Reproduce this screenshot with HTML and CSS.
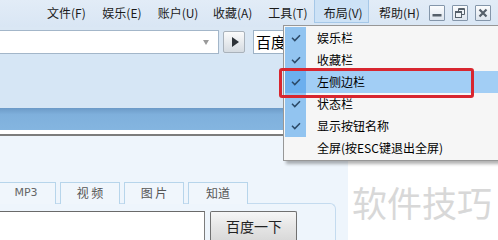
FILE: index.html
```html
<!DOCTYPE html>
<html lang="zh-CN">
<head>
<meta charset="utf-8">
<title>布局菜单</title>
<link rel="stylesheet" href="styles.css">
</head>
<body>
<div class="app">
  <header class="menubar">
    <nav class="menus">
      <span class="menu">文件(F)</span>
      <span class="menu">娱乐(E)</span>
      <span class="menu">账户(U)</span>
      <span class="menu">收藏(A)</span>
      <span class="menu">工具(T)</span>
      <span class="menu menu-open">布局(V)</span>
      <span class="menu">帮助(H)</span>
    </nav>
    <div class="winbtns">
      <span class="winbtn"><svg width="14" height="14" viewBox="0 0 14 14"><rect x="2.5" y="8" width="9" height="2.5" fill="#56606a"/></svg></span>
      <span class="winbtn"><svg width="14" height="14" viewBox="0 0 14 14"><path d="M5.5 2.5h6v6h-6z M5.5 3.5h6" fill="none" stroke="#56606a" stroke-width="1"/><rect x="2.5" y="5.5" width="6" height="6" fill="#eef2f6" stroke="#56606a" stroke-width="1"/><path d="M2.5 6.5h6" stroke="#56606a" stroke-width="1"/></svg></span>
      <span class="winbtn"><svg width="14" height="14" viewBox="0 0 14 14"><path d="M3.5 3.5l7 7M10.5 3.5l-7 7" stroke="#56606a" stroke-width="2.2"/></svg></span>
    </div>
  </header>

  <div class="toolbar">
    <div class="addr"><span class="addr-arrow"></span></div>
    <span class="go"><span class="go-tri"></span></span>
    <div class="engine">百度</div>
  </div>

  <div class="band"></div>
  <div class="bluebar"></div>
  <div class="sep"></div>

  <div class="content">
    <div class="left">
      <div class="tabs">
        <span class="tab tab-mp3">MP3</span>
        <span class="tab">视 频</span>
        <span class="tab">图 片</span>
        <span class="tab">知道</span>
      </div>
      <div class="panel">
        <div class="query"></div>
        <span class="submit">百度一下</span>
      </div>
    </div>
    <div class="right">
      <span class="watermark">软件技巧</span>
    </div>
  </div>
</div>

<div class="dropdown">
  <div class="item checked"><span class="chk"><svg width="10" height="8" viewBox="0 0 10 8"><path d="M1 3.8L3.8 6.6L9 1.2" fill="none" stroke="#2c4a68" stroke-width="1.5"/></svg></span><span class="label">娱乐栏</span></div>
  <div class="item checked"><span class="chk"><svg width="10" height="8" viewBox="0 0 10 8"><path d="M1 3.8L3.8 6.6L9 1.2" fill="none" stroke="#2c4a68" stroke-width="1.5"/></svg></span><span class="label">收藏栏</span></div>
  <div class="item checked hot"><span class="chk"><svg width="10" height="8" viewBox="0 0 10 8"><path d="M1 3.8L3.8 6.6L9 1.2" fill="none" stroke="#2c4a68" stroke-width="1.5"/></svg></span><span class="label">左侧边栏</span></div>
  <div class="item checked"><span class="chk"><svg width="10" height="8" viewBox="0 0 10 8"><path d="M1 3.8L3.8 6.6L9 1.2" fill="none" stroke="#2c4a68" stroke-width="1.5"/></svg></span><span class="label">状态栏</span></div>
  <div class="item checked"><span class="chk"><svg width="10" height="8" viewBox="0 0 10 8"><path d="M1 3.8L3.8 6.6L9 1.2" fill="none" stroke="#2c4a68" stroke-width="1.5"/></svg></span><span class="label">显示按钮名称</span></div>
  <div class="item"><span class="chk"></span><span class="label">全屏(按ESC键退出全屏)</span></div>
</div>
<div class="callout"></div>
</body>
</html>
```

FILE: styles.css
```css
html, body {
  margin: 0;
  padding: 0;
}
body {
  width: 498px;
  height: 240px;
  overflow: hidden;
  position: relative;
  font-family: "Noto Sans CJK SC", "Liberation Sans", sans-serif;
  font-size: 12px;
  color: #000;
  background: #fff;
}
.app {
  height: 240px;
  overflow: hidden;
}

/* menu bar */
.menubar {
  height: 27px;
  display: flex;
  background: linear-gradient(#e2ecf7, #d9e6f4);
}
.menus {
  display: flex;
  padding-left: 37px;
}
.menu {
  width: 55.33px;
  box-sizing: border-box;
  height: 23px;
  padding: 3px 0 0 9px;
  line-height: 19px;
  white-space: nowrap;
  color: #1a1a1a;
  border: 1px solid transparent;
  border-top: 0;
}
.menu-open {
  background: #cde2f6;
  border-color: #a6c8e8;
}
.winbtns {
  margin-left: auto;
  display: flex;
  gap: 7px;
  padding: 5px 7px 0 0;
}
.winbtn {
  width: 16px;
  height: 16px;
  box-sizing: border-box;
  border: 1px solid #8496aa;
  border-radius: 1px;
  background: linear-gradient(#fbfcfd, #dde5ee);
  display: flex;
  align-items: center;
  justify-content: center;
}

/* toolbar */
.toolbar {
  height: 27px;
  display: flex;
  align-items: flex-start;
  padding-top: 3px;
  box-sizing: border-box;
  background: #dae7f4;
}
.addr {
  width: 220px;
  height: 24px;
  margin-left: -1px;
  box-sizing: border-box;
  border: 1px solid #a3b6c9;
  background: #fff;
  display: flex;
  align-items: center;
  justify-content: flex-end;
  padding-right: 9px;
}
.addr-arrow {
  width: 0;
  height: 0;
  border-left: 3.5px solid transparent;
  border-right: 3.5px solid transparent;
  border-top: 5px solid #9a9a9a;
}
.go {
  width: 22px;
  height: 22px;
  margin: 1px 0 0 4px;
  box-sizing: border-box;
  border: 1px solid #a9b2bb;
  border-radius: 2px;
  background: linear-gradient(#fbfbfb, #d5dbe1);
  display: flex;
  align-items: center;
  justify-content: center;
}
.go-tri {
  width: 0;
  height: 0;
  margin-left: 2px;
  border-top: 5px solid transparent;
  border-bottom: 5px solid transparent;
  border-left: 7px solid #2e3338;
}
.engine {
  width: 100px;
  height: 24px;
  margin-left: 8px;
  box-sizing: border-box;
  border: 1px solid #9db2c6;
  background: #fff;
  font-size: 15px;
  line-height: 22px;
  padding-left: 2px;
}

.band {
  height: 54px;
  background: #d6e6f5;
}
.bluebar {
  height: 22px;
  background: linear-gradient(#6c9ac7, #7fb0dc 30%, #84b5e0);
}
.sep {
  height: 4px;
  background: #fff;
  border-bottom: 2px solid #7c7c7c;
}

/* content */
.content {
  height: 104px;
  display: flex;
  overflow: hidden;
}
.left {
  width: 348px;
  background: #eef5fc;
  padding-top: 46px;
  box-sizing: border-box;
}
.tabs {
  display: flex;
  gap: 4px;
  margin-left: -4px;
  margin-bottom: -1px;
  position: relative;
}
.tab {
  width: 60px;
  height: 22px;
  box-sizing: border-box;
  border: 1px solid #b7d5eb;
  border-bottom: 0;
  background: #f0f6fc;
  color: #555;
  text-align: center;
  line-height: 20px;
  font-size: 12px;
}
.tab-mp3 {
  font-family: "DejaVu Sans", sans-serif;
  font-size: 11px;
  color: #666;
}
.panel {
  width: 336px;
  height: 37px;
  box-sizing: border-box;
  border-top: 1px solid #c4dbef;
  border-right: 1px solid #c4dbef;
  border-top-right-radius: 6px;
  display: flex;
  align-items: flex-start;
  gap: 5px;
  padding-top: 7px;
}
.query {
  width: 206px;
  height: 29px;
  margin-left: -1px;
  box-sizing: border-box;
  border: 1px solid #7d7d7d;
  border-top-color: #6a6a6a;
  border-bottom: 0;
  background: #fff;
}
.submit {
  width: 87px;
  height: 29px;
  box-sizing: border-box;
  border: 1px solid #707070;
  border-bottom: 0;
  border-radius: 2px 2px 0 0;
  background: linear-gradient(#f6f6f6, #e6e6e6 50%, #d9d9d9);
  font-size: 14px;
  color: #222;
  line-height: 29px;
  padding-left: 15px;
}
.right {
  flex: 1;
  background: #fff;
}
.watermark {
  display: block;
  margin-top: 47px;
  padding-left: 4px;
  font-size: 35px;
  line-height: 38px;
  color: #d8d8d8;
  white-space: nowrap;
}

/* dropdown */
.dropdown {
  position: absolute;
  left: 283px;
  top: 25px;
  width: 220px;
  box-sizing: border-box;
  border: 1px solid #979797;
  background: #f6f6f6;
  padding: 1px;
  box-shadow: 3px 3px 3px rgba(0, 0, 0, 0.3);
}
.item {
  display: flex;
  height: 22px;
}
.chk {
  width: 21px;
  flex: none;
  display: flex;
  align-items: center;
  justify-content: center;
}
.checked .chk {
  background: #92c4f0;
}
.label {
  flex: 1;
  padding-left: 11px;
  line-height: 22px;
  white-space: nowrap;
}
.hot .label {
  background: #a2cef5;
}
.hot .chk {
  background: #6cafee;
}

.callout {
  position: absolute;
  left: 279px;
  top: 68px;
  width: 195px;
  height: 30px;
  box-sizing: border-box;
  border: 3px solid #d8262f;
  border-radius: 3px;
}
```
